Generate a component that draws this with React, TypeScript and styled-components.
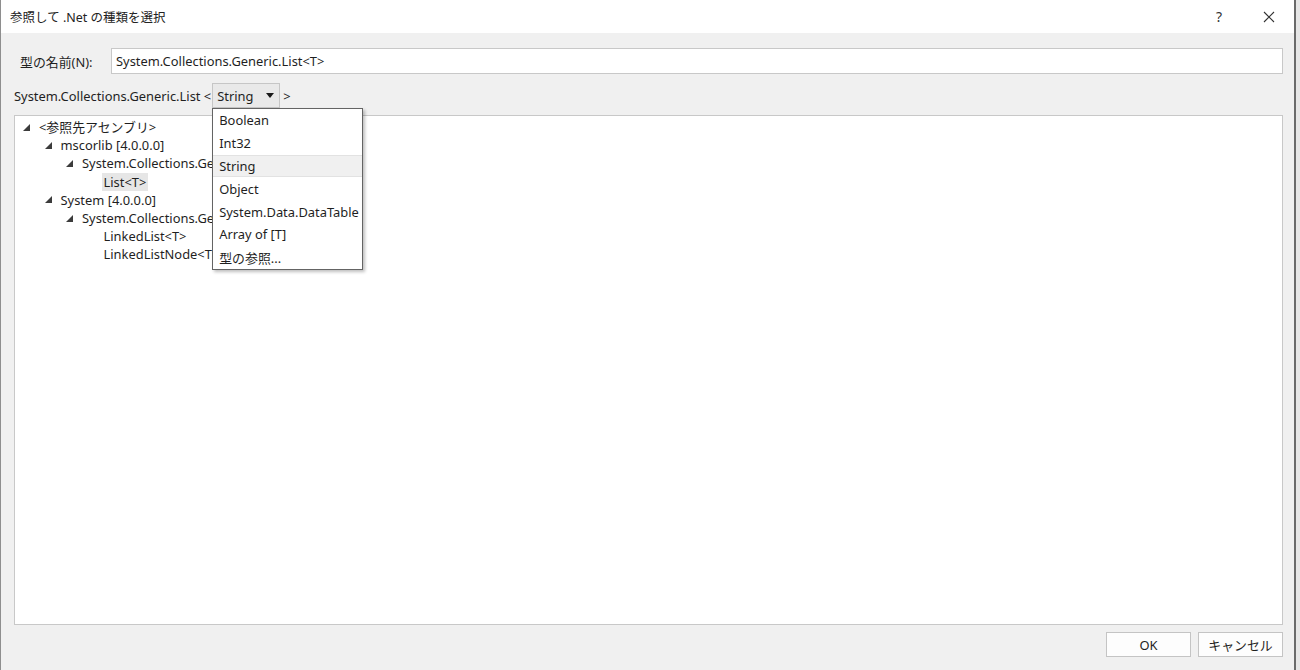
import React from 'react'
import styled, { createGlobalStyle } from 'styled-components'

const GlobalStyle = createGlobalStyle`
  html, body {
    margin: 0;
    padding: 0;
    background: #e6e6e6;
  }
  body {
    font-family: 'Noto Sans', 'Noto Sans CJK JP', sans-serif;
    font-size: 12.9px;
    color: #1f1f1f;
  }
`

type TreeNode = { label: string; level: number; expanded?: boolean; selected?: boolean }

const treeItems: TreeNode[] = [
  { label: '<参照先アセンブリ>', level: 0, expanded: true },
  { label: 'mscorlib [4.0.0.0]', level: 1, expanded: true },
  { label: 'System.Collections.Generic', level: 2, expanded: true },
  { label: 'List<T>', level: 3, selected: true },
  { label: 'System [4.0.0.0]', level: 1, expanded: true },
  { label: 'System.Collections.Generic', level: 2, expanded: true },
  { label: 'LinkedList<T>', level: 3 },
  { label: 'LinkedListNode<T>', level: 3 },
]

const typeOptions = ['Boolean', 'Int32', 'String', 'Object', 'System.Data.DataTable', 'Array of [T]', '型の参照...']

const ExpandedGlyph = () => (
  <svg width="7" height="7" viewBox="0 0 7 7">
    <polygon points="7,0 7,7 0,7" fill="#3c3c3c" />
  </svg>
)

const App = () => {
  return (
    <>
      <GlobalStyle />
      <Window>
        <TitleBar>
          <span className="title">参照して .Net の種類を選択</span>
          <div className="title-buttons">
            <span className="help">?</span>
            <svg width="12" height="12" viewBox="0 0 12 12">
              <path d="M1 1 L11 11 M11 1 L1 11" stroke="#333" strokeWidth="1.1" />
            </svg>
          </div>
        </TitleBar>
        <Body>
          <NameRow>
            <label>型の名前(N):</label>
            <TextBox>System.Collections.Generic.List&lt;T&gt;</TextBox>
          </NameRow>
          <GenericRow>
            <span>System.Collections.Generic.List &lt;</span>
            <ComboWrap>
              <Combo>
                <span>String</span>
                <svg width="8" height="5" viewBox="0 0 8 5">
                  <polygon points="0,0 8,0 4,5" fill="#1a1a1a" />
                </svg>
              </Combo>
              <DropList>
                {typeOptions.map((opt) => (
                  <DropItem key={opt} $active={opt === 'String'}>
                    {opt}
                  </DropItem>
                ))}
              </DropList>
            </ComboWrap>
            <span>&gt;</span>
          </GenericRow>
          <TreePanel>
            {treeItems.map((item, index) => (
              <TreeRow key={index} $level={item.level}>
                <span className="toggle">{item.expanded && <ExpandedGlyph />}</span>
                <TreeLabel $selected={item.selected}>{item.label}</TreeLabel>
              </TreeRow>
            ))}
          </TreePanel>
          <Footer>
            <DialogButton>OK</DialogButton>
            <DialogButton>キャンセル</DialogButton>
          </Footer>
        </Body>
      </Window>
    </>
  )
}

const Window = styled.div`
  width: 1296px;
  height: 670px;
  display: flex;
  flex-direction: column;
  border-left: 1px solid #8e8e8e;
  border-right: 2px solid #6a6a6a;
  box-sizing: border-box;
  background: #f0f0f0;
`

const TitleBar = styled.div`
  height: 33px;
  flex-shrink: 0;
  background: #fff;
  display: flex;
  align-items: center;
  justify-content: space-between;
  padding-left: 9px;
  .title {
    font-size: 12.5px;
    color: #222;
  }
  .title-buttons {
    display: flex;
    align-items: center;
    column-gap: 41px;
    padding-right: 19px;
  }
  .help {
    font-size: 14px;
    color: #333;
  }
`

const Body = styled.div`
  flex: 1;
  display: flex;
  flex-direction: column;
  padding: 15px 11px 13px 13px;
  min-height: 0;
`

const NameRow = styled.div`
  display: flex;
  align-items: center;
  height: 26px;
  label {
    width: 97px;
    padding-left: 6px;
    box-sizing: border-box;
  }
`

const TextBox = styled.div`
  flex: 1;
  height: 26px;
  box-sizing: border-box;
  background: #fff;
  border: 1px solid #c8c8c8;
  display: flex;
  align-items: center;
  padding-left: 4px;
`

const GenericRow = styled.div`
  display: flex;
  align-items: center;
  column-gap: 1px;
  margin-top: 9px;
  height: 25px;
`

const ComboWrap = styled.div`
  position: relative;
  margin-right: 2px;
`

const Combo = styled.div`
  width: 68px;
  height: 25px;
  box-sizing: border-box;
  border: 1px solid #c6c6c6;
  background: #e9e9e9;
  display: flex;
  align-items: center;
  justify-content: space-between;
  padding: 0 5px 0 4px;
`

const DropList = styled.div`
  position: absolute;
  top: 100%;
  left: 0;
  width: 151px;
  box-sizing: border-box;
  background: #fff;
  border: 1px solid #646464;
  box-shadow: 2px 2px 3px rgba(0, 0, 0, 0.25);
  padding: 0;
  z-index: 2;
`

const DropItem = styled.div<{ $active?: boolean }>`
  height: 22.8px;
  padding-left: 6px;
  white-space: nowrap;
  box-sizing: border-box;
  display: flex;
  align-items: center;
  background: ${(p) => (p.$active ? '#f0f0f0' : 'transparent')};
  border-top: 1px solid ${(p) => (p.$active ? '#e2e2e2' : 'transparent')};
  border-bottom: 1px solid ${(p) => (p.$active ? '#e2e2e2' : 'transparent')};
`

const TreePanel = styled.div`
  flex: 1;
  margin-top: 7px;
  background: #fff;
  border: 1px solid #c8c8c8;
  padding-top: 2px;
  box-sizing: border-box;
`

const TreeRow = styled.div<{ $level: number }>`
  display: flex;
  align-items: center;
  height: 18.2px;
  padding-left: ${(p) => 8 + p.$level * 21.5}px;
  .toggle {
    width: 14px;
    display: flex;
    align-items: center;
  }
`

const TreeLabel = styled.span<{ $selected?: boolean }>`
  padding: 0 2px;
  line-height: 18px;
  background: ${(p) => (p.$selected ? '#e6e6e6' : 'transparent')};
  white-space: nowrap;
`

const Footer = styled.div`
  display: flex;
  justify-content: flex-end;
  column-gap: 7px;
  margin-top: 7px;
`

const DialogButton = styled.div`
  width: 85px;
  height: 25px;
  box-sizing: border-box;
  border: 1px solid #c4c4c4;
  background: #fdfdfd;
  display: flex;
  align-items: center;
  justify-content: center;
`

export default App
